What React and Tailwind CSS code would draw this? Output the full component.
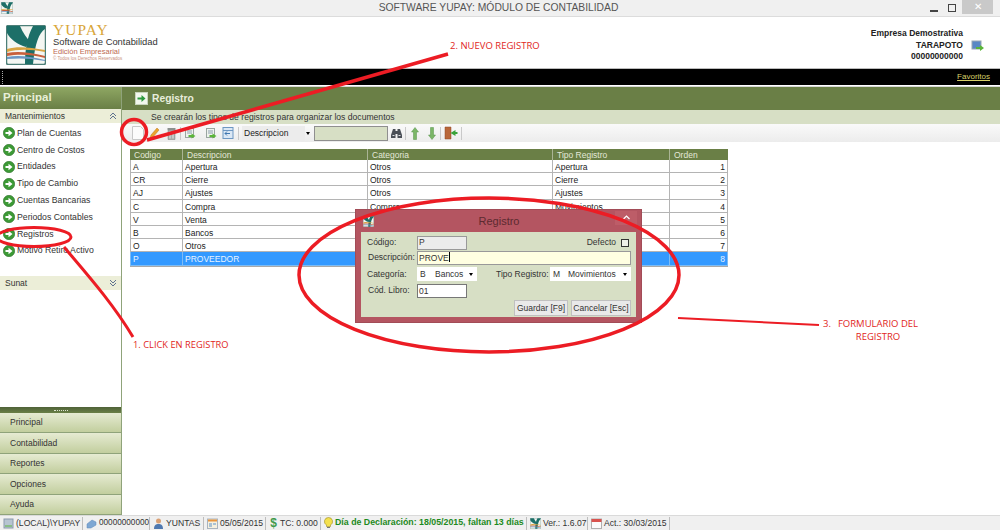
const menu = ['Plan de Cuentas', 'Centro de Costos', 'Entidades', 'Tipo de Cambio', 'Cuentas Bancarias', 'Periodos Contables', 'Registros', 'Motivo Retiro Activo']
const bottomNav = ['Principal', 'Contabilidad', 'Reportes', 'Opciones', 'Ayuda']
const rows = [
  ['A', 'Apertura', 'Otros', 'Apertura', 1],
  ['CR', 'Cierre', 'Otros', 'Cierre', 2],
  ['AJ', 'Ajustes', 'Otros', 'Ajustes', 3],
  ['C', 'Compra', 'Compra', 'Movimientos', 4],
  ['V', 'Venta', 'Venta', 'Movimientos', 5],
  ['B', 'Bancos', 'Bancos', 'Movimientos', 6],
  ['O', 'Otros', 'Otros', 'Movimientos', 7],
  ['P', 'PROVEEDOR', 'Bancos', 'Movimientos', 8],
]

function Logo({ size = 40 }) {
  return (
    <svg width={size} height={size} viewBox="0 0 40 40" className="shrink-0">
      <rect x="0.500" y="0.500" width="39" height="39" rx="2" fill="#f4f6f2" stroke="#4d7f78" strokeWidth="1.500" />
      <path d="M1 1h13c3 7 7 12 10 16-2 2-3 3-4 5C12 20 4 14 1 8z" fill="#1d6f68" />
      <path d="M27 1h12v3c-6 4-10 14-12 35h-8c0-14 2-27 8-38z" fill="#1d6f68" />
      <path d="M1 24c10-3 22-2 38 1v2C24 24 12 24 1 27z" fill="#d9a441" />
      <path d="M1 28c10-2 22-1 38 3v2C24 29 12 29 1 31z" fill="#c8603c" />
      <path d="M1 32c10-2 22-1 38 3v1C24 33 12 33 1 34z" fill="#6c97c4" />
    </svg>
  )
}

function GoIcon() {
  return (
    <svg width="12" height="12" viewBox="0 0 12 12" className="shrink-0">
      <circle cx="6" cy="6" r="5.700" fill="#3c9a35" stroke="#2b6e2a" strokeWidth="0.600" />
      <path d="M2.500 5h3V2.800L9.500 6 5.500 9.200V7h-3z" fill="#fff" />
    </svg>
  )
}

function Chevrons({ down }) {
  return (
    <svg width="8" height="8" viewBox="0 0 8 8" fill="none" stroke="#5f7390" className={down ? 'rotate-180' : ''}>
      <path d="M1 4l3-3 3 3M1 7l3-3 3 3" />
    </svg>
  )
}

function DocArrow({ color = '#5bb53a' }) {
  return (
    <svg width="11" height="11" viewBox="0 0 11 11" className="shrink-0">
      <rect x="0.500" y="0.500" width="8" height="9" fill="#eef2ee" stroke="#9aa5a0" />
      <path d="M2 3h5M2 5h5" stroke="#8fa0b0" />
      <path d="M3.500 7h3V5.500L10.500 8 6.500 10.500V9h-3z" fill={color} />
    </svg>
  )
}

function Sep() {
  return <span className="block h-[13px] w-px bg-[#c9c9c9] shrink-0" />
}

function Toolbar() {
  return (
    <div className="h-[18px] flex items-center bg-gradient-to-b from-[#fafafa] to-[#ececec] pl-[10px] shrink-0">
      <svg width="12" height="14" viewBox="0 0 12 14" className="shrink-0">
        <path d="M.5.500h8l3 3v10H.500z" fill="#fbfbfb" stroke="#c8c8c8" />
      </svg>
      <svg width="11" height="13" viewBox="0 0 11 13" className="shrink-0 ml-[5px]">
        <path d="M8 1l2 2-6 7-3 1.500L2 8z" fill="#eba42c" stroke="#b9791a" strokeWidth="0.500" />
      </svg>
      <svg width="9" height="13" viewBox="0 0 9 13" className="shrink-0 ml-[7px]">
        <path d="M1 3h7v9.500H1z" fill="#a9aeab" stroke="#7d8380" strokeWidth="0.500" />
        <rect x="0.500" y="1" width="8" height="2" fill="#8b918e" />
        <path d="M3 4.500v7M6 4.500v7" stroke="#e4e6e5" />
      </svg>
      <span className="ml-[4px]"><Sep /></span>
      <span className="ml-[4px] flex"><DocArrow /></span>
      <span className="ml-[10px] flex"><DocArrow /></span>
      <svg width="12" height="12" viewBox="0 0 12 12" className="shrink-0 ml-[5px]">
        <rect x="1" y="0.500" width="10" height="11" fill="#dbe8f5" stroke="#6d97c2" />
        <path d="M1 3.500h10" stroke="#6d97c2" />
        <path d="M8 6.500H3M5 4.500l-2 2 2 2" stroke="#3f77b0" fill="none" />
      </svg>
      <span className="ml-[4px]"><Sep /></span>
      <div className="ml-[3px] w-[63px] h-[15px] bg-[#ececec] flex items-center pl-[2px] text-[8.500px] text-[#222] shrink-0">Descripcion</div>
      <span className="ml-[1px] w-0 h-0 border-x-[2.500px] border-x-transparent border-t-[3px] border-t-black shrink-0" />
      <div className="ml-[4px] w-[74px] h-[15px] bg-[#d7dfc5] border border-[#8f8f8f] shrink-0" />
      <svg width="11" height="10" viewBox="0 0 11 10" className="shrink-0 ml-[3px]">
        <path d="M2 1h2.500v2h2V1H9l2 6v3H6.500V6h-2v4H0V7z" fill="#4a4f57" />
        <path d="M1.500 7.500h2M7.500 7.500h2" stroke="#dfe3e8" />
      </svg>
      <span className="ml-[3px]"><Sep /></span>
      <svg width="8" height="13" viewBox="0 0 8 13" className="shrink-0 ml-[5px]">
        <path d="M4 .500L7.500 5H5.500v7.500h-3V5H.500z" fill="#7bb667" stroke="#56924a" strokeWidth="0.500" />
      </svg>
      <svg width="8" height="13" viewBox="0 0 8 13" className="shrink-0 ml-[9px]">
        <path d="M4 12.500L7.500 8H5.500V.500h-3V8H.500z" fill="#7bb667" stroke="#56924a" strokeWidth="0.500" />
      </svg>
      <span className="ml-[4px]"><Sep /></span>
      <svg width="14" height="14" viewBox="0 0 14 14" className="shrink-0 ml-[3px]">
        <path d="M1 1h6v12H1z" fill="#b9673a" stroke="#8d4a26" strokeWidth="0.500" />
        <path d="M13.500 6h-2V4L6.500 7 11.500 10V8h2z" fill="#39a33a" />
      </svg>
      <span className="ml-[3px]"><Sep /></span>
    </div>
  )
}

function Grid() {
  const cols = 'grid grid-cols-[53px_185px_185px_117px_58px]'
  return (
    <div className="mt-[7px] ml-[8px] w-[598px] border-b border-[#a9a9a9]">
      <div className={`${cols} h-[11px] bg-[#6a7f46] text-[#e3e8d8] text-[8.500px] leading-[12px]`}>
        {['Codigo', 'Descripcion', 'Categoria', 'Tipo Registro', 'Orden'].map(h => (
          <div key={h} className="pl-[4px] border-r border-[#aab495] last:border-r-0">{h}</div>
        ))}
      </div>
      {rows.map((r, i) => (
        <div key={r[0]} className={`${cols} h-[13.200px] text-[8.500px] leading-[14px] ${i === 7 ? 'bg-[#3399ff] text-[#e8f3ff]' : 'bg-white text-[#222]'}`}>
          {r.map((c, j) => (
            <div key={j} className={`pl-[2px] border-b border-r overflow-hidden ${i === 7 ? 'border-[#7dbcf5]' : 'border-[#b4b4b4]'} ${j === 0 ? 'border-l' : ''} ${j === 4 ? 'text-right pr-[2px]' : ''}`}>{c}</div>
          ))}
        </div>
      ))}
    </div>
  )
}

function Combo({ code, label, className }) {
  return (
    <div className={`h-[14px] bg-white flex items-center text-[8.500px] text-[#333] whitespace-nowrap ${className}`}>
      <span className="ml-[3px] w-[15px]">{code}</span>
      <span className="flex-1">{label}</span>
      <span className="w-0 h-0 mr-[4px] border-x-[2.500px] border-x-transparent border-t-[3px] border-t-black" />
    </div>
  )
}

function Dialog() {
  return (
    <div className="absolute left-[355px] top-[209px] w-[287px] h-[114px] bg-[#b45561] border border-[#a24c57] flex flex-col">
      <div className="h-[22px] flex items-center shrink-0">
        <span className="ml-[7px] flex"><Logo size={11} /></span>
        <span className="flex-1 text-center text-[11px] text-[#5c2a30] pl-[9px]">Registro</span>
        <span className="w-[22px] h-[14px] mr-[4px] -mt-[7px] bg-[#bd5d68] flex items-center justify-center">
          <svg width="7" height="5" viewBox="0 0 7 5" fill="none" stroke="#fff" strokeWidth="1.200"><path d="M.5 4l3-3 3 3" /></svg>
        </span>
      </div>
      <div className="mx-[5px] h-[85px] bg-[#d7dfc5] text-[8.500px] text-[#333] flex flex-col pl-[6px] pr-[5px] pt-[3px] whitespace-nowrap">
        <div className="flex items-center h-[15px]">
          <span className="w-[50px]">Código:</span>
          <div className="w-[50px] h-[14px] bg-[#ececec] border border-[#999] pl-[1px] leading-[11px]">P</div>
          <span className="ml-auto">Defecto</span>
          <span className="w-[8px] h-[8px] border border-[#333] bg-[#eef0e8] ml-[5px] mr-[2px]" />
        </div>
        <div className="flex items-center h-[15px]">
          <span className="w-[50px] pl-[1px]">Descripción:</span>
          <div className="flex-1 h-[14px] bg-[#ffffe1] border border-[#999] pl-[1px] leading-[12px]">PROVE<span className="border-l border-black h-[10px] inline-block align-[-1px]" /></div>
        </div>
        <div className="flex items-center h-[18px]">
          <span className="w-[50px]">Categoría:</span>
          <Combo code="B" label="Bancos" className="w-[60px]" />
          <span className="ml-[19px] w-[54px]">Tipo Registro:</span>
          <Combo code="M" label="Movimientos" className="flex-1" />
        </div>
        <div className="flex items-center h-[15px]">
          <span className="w-[50px] pl-[1px]">Cód. Libro:</span>
          <div className="w-[50px] h-[14px] bg-white border border-[#777] pl-[1px] leading-[12px]">01</div>
        </div>
        <div className="flex justify-end gap-[3px] mt-[2px]">
          <button className="w-[54px] h-[16px] bg-[#e9e9e9] border border-[#c0c0c0] text-[8.500px] leading-[14px] text-[#333] whitespace-nowrap">Guardar [F9]</button>
          <button className="w-[60px] h-[16px] bg-[#e9e9e9] border border-[#c0c0c0] text-[8.500px] leading-[14px] text-[#333] whitespace-nowrap">Cancelar [Esc]</button>
        </div>
      </div>
    </div>
  )
}

function StatusCell({ width, children, icon }) {
  return (
    <div className="h-[13px] flex items-center gap-[2px] bg-[#f0f0f0] border-r border-[#bdbdbd] pl-[1px] shrink-0 overflow-hidden whitespace-nowrap" style={{ width }}>
      {icon}
      {children}
    </div>
  )
}

function StatusBar() {
  return (
    <div className="h-[15px] bg-[#f0f0f0] flex items-center gap-[2px] pl-[2px] text-[8.600px] text-[#333] border-t border-[#dadada] shrink-0">
      <StatusCell width={81} icon={
        <svg width="11" height="11" viewBox="0 0 11 11" className="shrink-0"><rect x="1" y="1" width="9" height="9" fill="#b7c4d2" stroke="#8b9aac" /><path d="M2 8h7" stroke="#5bb53a" /></svg>
      }>(LOCAL)\YUPAY</StatusCell>
      <StatusCell width={65} icon={
        <svg width="11" height="11" viewBox="0 0 11 11" className="shrink-0"><path d="M1 10V6l5-4 4 2v3l-5 3z" fill="#7ea7d3" stroke="#5f88b8" strokeWidth="0.500" /></svg>
      }><span className="text-[8.200px]">00000000000</span></StatusCell>
      <StatusCell width={52} icon={
        <svg width="11" height="11" viewBox="0 0 11 11" className="shrink-0"><circle cx="5.500" cy="3" r="2.500" fill="#d9a074" /><path d="M1 11c0-4 2-5 4.500-5S10 7 10 11z" fill="#4f79b0" /></svg>
      }>YUNTAS</StatusCell>
      <StatusCell width={60} icon={
        <svg width="11" height="11" viewBox="0 0 11 11" className="shrink-0"><rect x="0.500" y="1" width="10" height="9.500" fill="#f5f0df" stroke="#a9b4bf" /><rect x="1" y="1.500" width="9" height="2" fill="#e9963e" /><path d="M2 6h3M6 6h3M2 8h3" stroke="#5d93c9" /></svg>
      }>05/05/2015</StatusCell>
      <StatusCell width={53} icon={<span className="w-[9px] text-center text-[#3f9a4b] font-bold text-[12px] leading-none">$</span>}>TC: 0.000</StatusCell>
      <StatusCell width={204} icon={
        <svg width="9" height="12" viewBox="0 0 9 12" className="shrink-0"><path d="M4.500.500a4 4 0 0 1 2 7.500v1.500h-4V8a4 4 0 0 1 2-7.500z" fill="#f4e04d" stroke="#9a8a20" strokeWidth="0.600" /><path d="M3 10.500h3" stroke="#777" /></svg>
      }><span className="font-bold text-[#1d8a1d] text-[8.800px]">Día de Declaración: 18/05/2015, faltan 13 días</span></StatusCell>
      <StatusCell width={59} icon={<Logo size={11} />}>Ver.: 1.6.07</StatusCell>
      <StatusCell width={80} icon={
        <svg width="11" height="11" viewBox="0 0 11 11" className="shrink-0"><rect x="0.500" y="1" width="10" height="9.500" fill="#fbfbfb" stroke="#b0b0b0" /><rect x="0.500" y="1" width="10" height="3" fill="#d9534f" /></svg>
      }>Act.: 30/03/2015</StatusCell>
    </div>
  )
}

function Annotations() {
  return (
    <div className="absolute inset-0 pointer-events-none">
      <svg width="1000" height="530" className="absolute inset-0" fill="none" stroke="#ec1c24">
        <path d="M147 140L448 54" strokeWidth="3.500" />
        <ellipse cx="134" cy="132" rx="12.500" ry="12.500" strokeWidth="3.500" />
        <ellipse cx="34" cy="237" rx="37" ry="9.500" strokeWidth="3" />
        <path d="M64 247C85 272 112 302 133 337" strokeWidth="3" />
        <ellipse cx="489" cy="275" rx="190" ry="77" strokeWidth="3.500" />
        <path d="M678 318L819 325" strokeWidth="2" />
      </svg>
      <span className="absolute left-[450px] top-[39px] text-[9.500px] text-[#e1261c] font-['Open_Sans',sans-serif]">2. NUEVO REGISTRO</span>
      <span className="absolute left-[133px] top-[338px] text-[9.300px] text-[#e1261c] font-['Open_Sans',sans-serif]">1. CLICK EN REGISTRO</span>
      <span className="absolute left-[823px] top-[317px] text-[9.500px] text-[#e1261c] font-['Open_Sans',sans-serif] leading-[13px] flex gap-[7px]">
        <span>3.</span>
        <span className="text-center">FORMULARIO DEL<br />REGISTRO</span>
      </span>
    </div>
  )
}

export default function App() {
  return (
    <div className="relative h-[530px] w-full overflow-hidden bg-white flex flex-col font-['Liberation_Sans',Arial,sans-serif]">
      <div className="h-[17px] bg-[#f0f0f0] border-b border-[#dcdcdc] flex items-center shrink-0">
        <span className="ml-[1px] flex"><Logo size={12} /></span>
        <span className="flex-1 text-center text-[10.300px] text-[#555] pl-[54px]">SOFTWARE YUPAY: MÓDULO DE CONTABILIDAD</span>
        <span className="w-[8px] h-[2px] bg-[#444] mt-[5px]" />
        <span className="w-[8px] h-[8px] border border-[#444] ml-[10px] mr-[6px]" />
        <span className="w-[31px] h-[14px] -mt-[2px] mr-[7px] bg-[#c9c9c9] text-white text-[10px] leading-[14px] text-center">✕</span>
      </div>

      <div className="h-[51px] flex items-center shrink-0 pl-[6px] pr-[16px]">
        <span className="mt-[4px] flex"><Logo /></span>
        <div className="ml-[7px] flex flex-col">
          <span className="text-[#d9a63a] text-[14px] leading-[13px] font-['Liberation_Serif',serif] tracking-[1px] scale-x-110 origin-left translate-y-[1px]">YUPAY</span>
          <span className="text-[#333] text-[9.400px] leading-[11px]">Software de Contabilidad</span>
          <span className="text-[#bd6a50] text-[7.500px] leading-[9px]">Edición Empresarial</span>
          <span className="text-[#c98f7c] text-[4.500px] leading-[6px]">© Todos los Derechos Reservados</span>
        </div>
        <div className="ml-auto flex flex-col items-end text-[8.500px] font-bold text-[#222] leading-[11.500px] mt-[6px]">
          <span>Empresa Demostrativa</span>
          <span>TARAPOTO</span>
          <span>00000000000</span>
        </div>
        <svg width="13" height="13" viewBox="0 0 13 13" className="ml-[8px] mt-[6px]">
          <rect x="1" y="2" width="9" height="8" fill="#5a87c5" stroke="#9aa5b3" />
          <path d="M5 8h4V6l4 3-4 3v-2H5z" fill="#5bb53a" />
        </svg>
      </div>

      <div className="h-[17px] bg-black flex items-center shrink-0 border-t border-[#bbb]">
        <span className="ml-[2px] h-[13px] w-[2px] border-l border-dotted border-[#aaa]" />
        <a className="ml-auto mr-[10px] text-[8px] text-[#d9d26a] underline">Favoritos</a>
      </div>

      <div className="flex flex-1 min-h-0 mt-[1px] border-t border-[#d8d8d8]">
        <aside className="w-[122px] shrink-0 flex flex-col border-r border-[#8fa37a]">
          <div className="h-[22px] bg-gradient-to-b from-[#8fa763] to-[#6a7f46] text-[#e8efd8] font-bold text-[11.500px] leading-[21px] pl-[3px] shrink-0">Principal</div>
          <div className="h-[14px] bg-[#eceed8] flex items-center justify-between pl-[5px] pr-[4px] text-[8.500px] text-[#333] shrink-0">
            Mantenimientos <Chevrons />
          </div>
          <nav className="flex flex-col pl-[3px] pt-[2px] text-[8.700px] text-[#333] shrink-0">
            {menu.map(m => (
              <div key={m} className="h-[16.800px] flex items-center gap-[2px]"><GoIcon />{m}</div>
            ))}
          </nav>
          <div className="h-[14px] mt-[17px] bg-[#eceed8] flex items-center justify-between pl-[5px] pr-[4px] text-[8.500px] text-[#333] shrink-0">
            Sunat <Chevrons down />
          </div>
          <div className="flex-1" />
          <div className="h-[6px] bg-gradient-to-b from-[#4f6238] to-[#6a7f46] flex items-center justify-center shrink-0">
            <span className="w-[14px] border-t border-dotted border-[#dfe5d0]" />
          </div>
          {bottomNav.map(b => (
            <div key={b} className="h-[20.400px] bg-gradient-to-b from-[#e6ebd2] to-[#c2ce9e] border-b border-[#8fa37a] text-[8.500px] text-[#333] pl-[10px] flex items-center shrink-0">{b}</div>
          ))}
        </aside>

        <main className="flex-1 flex flex-col min-w-0">
          <div className="h-[23px] bg-[#6a7f46] flex items-center pl-[13px] gap-[4px] shrink-0">
            <svg width="13" height="13" viewBox="0 0 13 13">
              <rect x="0.500" y="0.500" width="12" height="12" fill="#f2f7ee" stroke="#c8d4bd" />
              <path d="M2.500 5.500h4V3l4 3.500-4 3.500V7.500h-4z" fill="#2d9a3f" />
            </svg>
            <span className="text-[#e8eddc] font-bold text-[10.300px]">Registro</span>
          </div>
          <div className="h-[14px] bg-[#d7dfc5] text-[8.600px] leading-[14px] text-[#333] pl-[29px] shrink-0">Se crearán los tipos de registros para organizar los documentos</div>
          <Toolbar />
          <Grid />
        </main>
      </div>

      <StatusBar />
      <Dialog />
      <Annotations />
    </div>
  )
}
